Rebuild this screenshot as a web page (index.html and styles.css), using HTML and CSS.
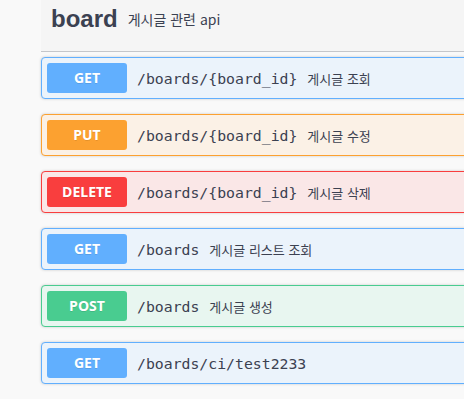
FILE: index.html
```html
<!DOCTYPE html>
<html lang="ko">

<head>
    <meta charset="UTF-8">
    <meta name="viewport" content="width=device-width, initial-scale=1.0">
    <title>board</title>
    <link rel="stylesheet" href="styles.css">
</head>

<body>
    <div class="section">
        <h3 class="tag">
            <span class="tag-name">board</span>
            <small class="tag-desc">게시글 관련 api</small>
        </h3>
        <div class="ops">
            <div class="op get">
                <span class="method">GET</span>
                <span class="path">/boards/{board_id}</span>
                <span class="summary">게시글 조회</span>
            </div>
            <div class="op put">
                <span class="method">PUT</span>
                <span class="path">/boards/{board_id}</span>
                <span class="summary">게시글 수정</span>
            </div>
            <div class="op delete">
                <span class="method">DELETE</span>
                <span class="path">/boards/{board_id}</span>
                <span class="summary">게시글 삭제</span>
            </div>
            <div class="op get">
                <span class="method">GET</span>
                <span class="path">/boards</span>
                <span class="summary">게시글 리스트 조회</span>
            </div>
            <div class="op post">
                <span class="method">POST</span>
                <span class="path">/boards</span>
                <span class="summary">게시글 생성</span>
            </div>
            <div class="op get">
                <span class="method">GET</span>
                <span class="path">/boards/ci/test2233</span>
                <span class="summary"></span>
            </div>
        </div>
    </div>
</body>

</html>
```

FILE: styles.css
```css
* {
    margin: 0;
    padding: 0;
    box-sizing: border-box;
}

body {
    background: #f9f9f9;
    color: #3b4151;
    font-family: 'Liberation Sans', 'Noto Sans CJK KR', sans-serif;
    overflow: hidden;
}

.section {
    margin-left: 41px;
    width: 470px;
}

.tag {
    display: flex;
    align-items: center;
    padding: 5px 20px 18px 10px;
    margin-bottom: 5px;
    background: #f5f5f5;
    border-bottom: 1px solid #c4c6ca;
}

.tag-name {
    font-size: 24px;
    line-height: 28px;
    font-weight: 700;
}

.tag-desc {
    font-size: 14px;
    font-weight: 400;
    padding: 0 10px;
    font-family: 'Noto Sans CJK KR', sans-serif;
}

.op {
    display: flex;
    align-items: center;
    padding: 5px;
    margin-bottom: 15px;
    border: 1px solid;
    border-radius: 4px;
    box-shadow: 0 0 3px rgba(0, 0, 0, 0.19);
}

.method {
    min-width: 80px;
    height: 30px;
    line-height: 30px;
    border-radius: 3px;
    text-align: center;
    color: #fff;
    font-family: 'Open Sans', sans-serif;
    font-size: 14px;
    font-weight: 700;
    text-shadow: 0 1px 0 rgba(0, 0, 0, 0.1);
}

.path {
    padding: 0 10px;
    font-family: 'DejaVu Sans Mono', monospace;
    font-size: 14.8px;
    font-weight: 400;
}

.summary {
    font-family: 'Noto Sans CJK KR', sans-serif;
    font-size: 13px;
}

.get {
    background: #ebf3fb;
    border-color: #61affe;
}

.get .method {
    background: #61affe;
}

.put {
    background: #fbf1e6;
    border-color: #fca130;
}

.put .method {
    background: #fca130;
}

.delete {
    background: #fae7e7;
    border-color: #f93e3e;
}

.delete .method {
    background: #f93e3e;
}

.post {
    background: #e8f6f0;
    border-color: #49cc90;
}

.post .method {
    background: #49cc90;
}
```
